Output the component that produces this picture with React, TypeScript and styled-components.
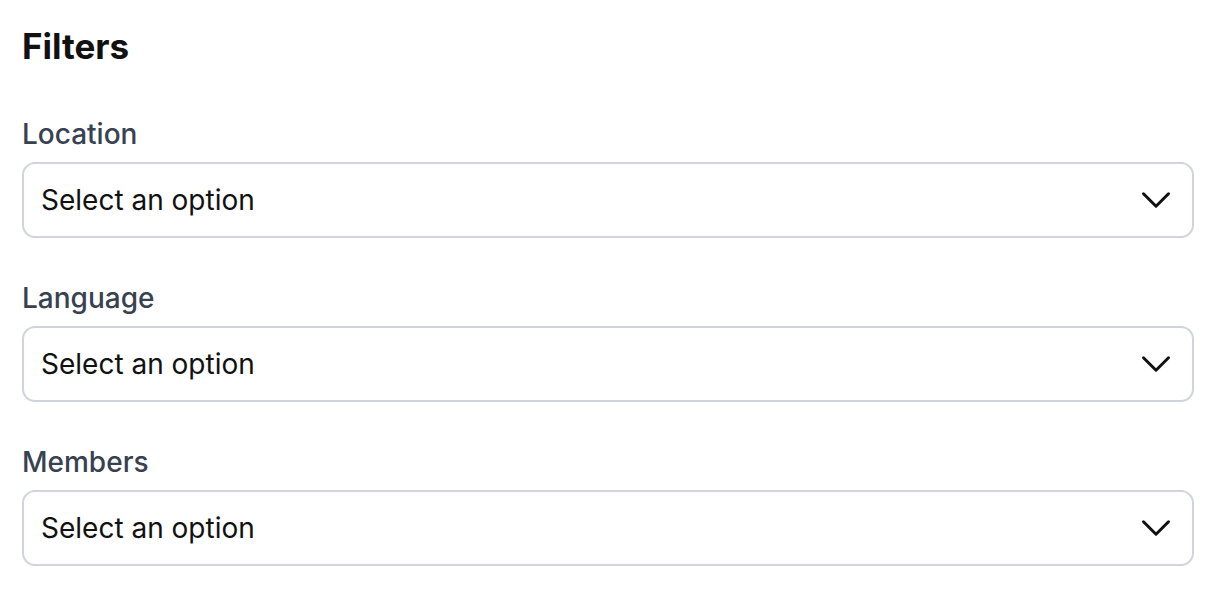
import React from "react";
import styled, { createGlobalStyle } from "styled-components";

const GlobalStyle = createGlobalStyle`
  * { box-sizing: border-box; }
  body {
    margin: 0;
    background: #ffffff;
    font-family: Inter, "Noto Sans", sans-serif;
    -webkit-font-smoothing: antialiased;
  }
`;

const Panel = styled.div`
  padding: 26px 22px 22px;
  display: flex;
  flex-direction: column;
`;

const Title = styled.h2`
  margin: 0 0 48px;
  font-size: 35px;
  line-height: 40px;
  font-weight: 700;
  color: #111111;
`;

const Fields = styled.div`
  display: flex;
  flex-direction: column;
  gap: 40px;
`;

const Field = styled.div`
  display: flex;
  flex-direction: column;
  gap: 8px;
`;

const Label = styled.label`
  font-size: 28px;
  line-height: 40px;
  font-weight: 500;
  color: #374151;
`;

const SelectBox = styled.button`
  display: flex;
  align-items: center;
  justify-content: space-between;
  width: 100%;
  height: 76px;
  padding: 0 16px 0 17px;
  border: 2px solid #d1d5db;
  border-radius: 13px;
  background: #ffffff;
  font-family: inherit;
  font-size: 28px;
  line-height: 40px;
  color: #111111;
  text-align: left;
  cursor: pointer;
`;

const Chevron = styled.svg`
  width: 40px;
  height: 40px;
  flex: none;
`;

const ChevronDown = () => (
  <Chevron viewBox="0 0 24 24" fill="none" stroke="currentColor" strokeWidth={1.8}>
    <path strokeLinecap="round" strokeLinejoin="round" d="m19.5 8.25-7.5 7.5-7.5-7.5" />
  </Chevron>
);

const filters = ["Location", "Language", "Members"];

export default function App() {
  return (
    <>
      <GlobalStyle />
      <Panel>
        <Title>Filters</Title>
        <Fields>
          {filters.map((f) => (
            <Field key={f}>
              <Label>{f}</Label>
              <SelectBox type="button">
                <span>Select an option</span>
                <ChevronDown />
              </SelectBox>
            </Field>
          ))}
        </Fields>
      </Panel>
    </>
  );
}
